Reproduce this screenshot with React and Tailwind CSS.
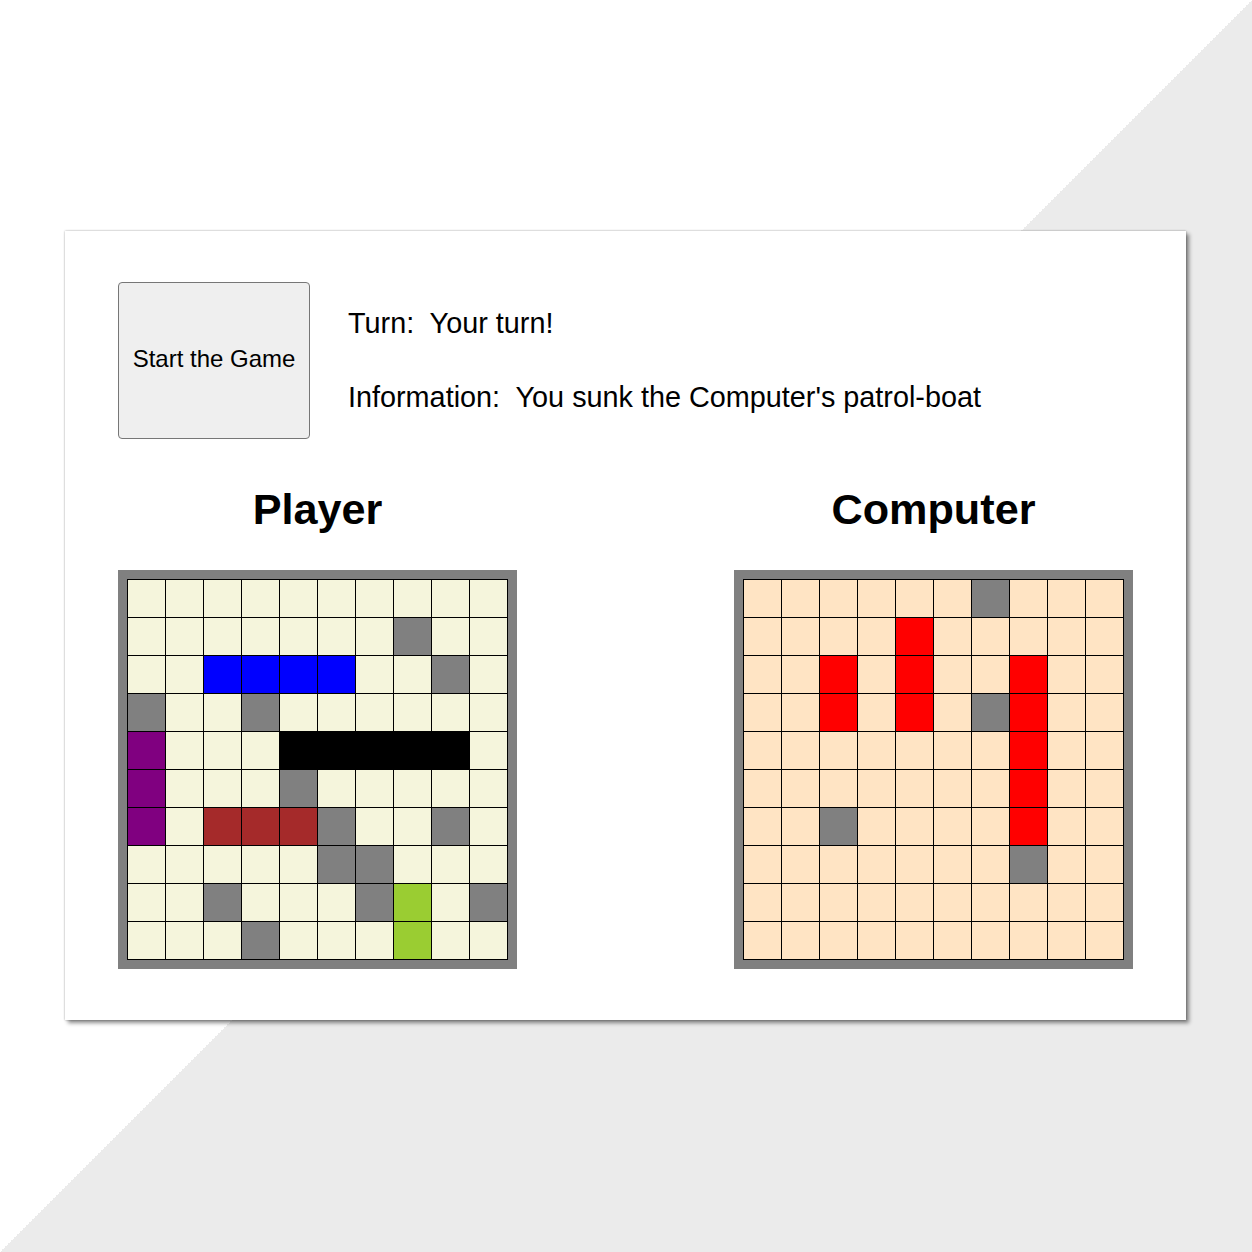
import React from 'react'

// cell codes: . empty, g miss (gray), b blue, p purple, k black, r brown, y green, x hit (red)
const playerBoard = [
  '..........',
  '.......g..',
  '..bbbb..g.',
  'g..g......',
  'p...kkkkk.',
  'p...g.....',
  'p.rrrg..g.',
  '.....gg...',
  '..g...gy.g',
  '...g...y..',
]

const computerBoard = [
  '......g...',
  '....x.....',
  '..x.x..x..',
  '..x.x.gx..',
  '.......x..',
  '.......x..',
  '..g....x..',
  '.......g..',
  '..........',
  '..........',
]

const cellColors = {
  g: 'bg-[#808080]',
  b: 'bg-[#0000ff]',
  p: 'bg-[#800080]',
  k: 'bg-black',
  r: 'bg-[#a52a2a]',
  y: 'bg-[#9acd32]',
  x: 'bg-[#ff0000]',
}

const Board = ({ rows, emptyColor }) => {
  return (
    <div className="bg-[#808080] p-[9px]">
      <div className="grid grid-cols-[repeat(10,37px)] auto-rows-[37px] gap-px bg-black p-px">
        {rows.flatMap((row, r) =>
          row.split('').map((c, i) => (
            <div key={`${r}-${i}`} className={c === '.' ? emptyColor : cellColors[c]} />
          ))
        )}
      </div>
    </div>
  )
}

const BoardColumn = ({ title, rows, emptyColor }) => (
  <div className="flex flex-col items-center">
    <h2 className="text-[43.2px] leading-[46px] font-bold text-black">{title}</h2>
    <div className="mt-[38px]">
      <Board rows={rows} emptyColor={emptyColor} />
    </div>
  </div>
)

export default function App() {
  return (
    <div
      className="w-[1252px] h-[1252px] pt-[231px] pl-[65px] bg-[linear-gradient(to_bottom_right,#ffffff_50%,#ebebeb_50%)]"
      style={{ fontFamily: '"Liberation Sans", Arial, sans-serif' }}
    >
      <div className="w-[1121px] h-[789px] bg-white px-[53px] pt-[51px] shadow-[0_0_2px_rgba(0,0,0,0.35),3px_3px_4px_rgba(0,0,0,0.45)]">
        <div className="flex items-center">
          <button className="w-[192px] h-[157px] pb-[3px] bg-[#efefef] border border-[#767676] rounded-[4px] text-[24px] text-black">
            Start the Game
          </button>
          <div className="ml-[38px] flex flex-col gap-[41px] text-[28.8px] leading-[33px] text-black">
            <p>Turn:&nbsp; Your turn!</p>
            <p>Information:&nbsp; You sunk the Computer's patrol-boat</p>
          </div>
        </div>
        <div className="mt-[47px] flex justify-between">
          <BoardColumn title="Player" rows={playerBoard} emptyColor="bg-[#f5f5dc]" />
          <BoardColumn title="Computer" rows={computerBoard} emptyColor="bg-[#ffe4c4]" />
        </div>
      </div>
    </div>
  )
}
